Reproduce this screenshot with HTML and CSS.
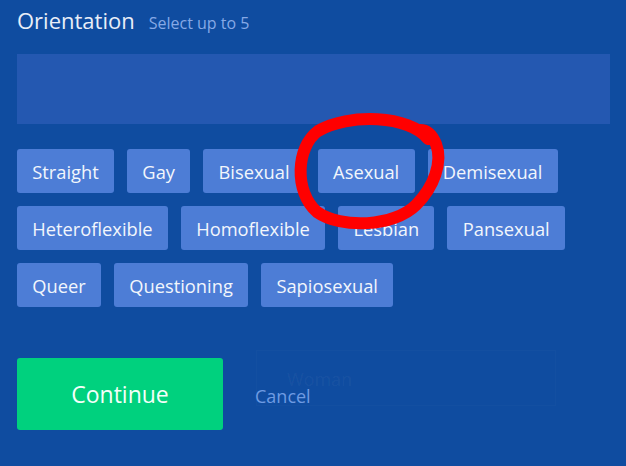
FILE: index.html
```html
<!DOCTYPE html>
<html>
<head>
<meta charset="utf-8">
<link rel="stylesheet" href="styles.css">
</head>
<body>
<div class="ghost" aria-hidden="true">
  <div class="ghost-tagline">the best dating site on Earth</div>
  <div class="ghost-field">Woman</div>
</div>
<main class="panel">
  <header class="head">
    <h1 class="title">Orientation</h1>
    <span class="hint">Select up to 5</span>
  </header>
  <div class="field"></div>
  <div class="chips">
    <button class="chip">Straight</button>
    <button class="chip">Gay</button>
    <button class="chip">Bisexual</button>
    <button class="chip">Asexual</button>
    <button class="chip">Demisexual</button>
    <button class="chip">Heteroflexible</button>
    <button class="chip">Homoflexible</button>
    <button class="chip">Lesbian</button>
    <button class="chip">Pansexual</button>
    <button class="chip">Queer</button>
    <button class="chip">Questioning</button>
    <button class="chip">Sapiosexual</button>
  </div>
  <div class="actions">
    <button class="continue">Continue</button>
    <a class="cancel" href="#">Cancel</a>
  </div>
</main>
<svg class="scribble" width="626" height="466" viewBox="0 0 626 466" aria-hidden="true">
  <path d="M428 139 C410 115 348 113 318 131 C296 147 294 192 317 212 C341 229 394 227 416 205 C434 187 443 162 436 144 C432 134 426 130 420 130" fill="none" stroke="#ff0000" stroke-width="12" stroke-linecap="round" stroke-linejoin="round"/>
</svg>
</body>
</html>
```
FILE: styles.css
```css
html, body {
  margin: 0;
  padding: 0;
}
body {
  width: 626px;
  height: 466px;
  overflow: hidden;
  background: #0f4ca0;
  font-family: "Open Sans", "Noto Sans", sans-serif;
  position: relative;
}
.ghost {
  position: absolute;
  inset: 0;
  pointer-events: none;
  overflow: hidden;
}
.ghost-tagline {
  position: absolute;
  left: 136px;
  top: 244px;
  font-size: 42px;
  white-space: nowrap;
  color: rgba(255, 255, 255, 0.025);
}
.ghost-field {
  position: absolute;
  left: 256px;
  top: 350px;
  width: 300px;
  height: 56px;
  padding-left: 30px;
  box-sizing: border-box;
  line-height: 56px;
  font-size: 18px;
  color: rgba(255, 255, 255, 0.05);
  border: 1px solid rgba(255, 255, 255, 0.02);
}
.panel {
  position: relative;
  padding: 5px 16px 0 17px;
}
.head {
  display: flex;
  align-items: baseline;
  gap: 14px;
}
.title {
  margin: 0;
  font-size: 22px;
  font-weight: 400;
  color: #e9eef8;
  line-height: 30px;
}
.hint {
  font-size: 16px;
  color: #86a9e6;
}
.field {
  margin-top: 19px;
  height: 70px;
  background: #2458b1;
}
.chips {
  margin-top: 25px;
  display: flex;
  flex-wrap: wrap;
  column-gap: 13px;
  row-gap: 13px;
  width: 593px;
}
.chip {
  height: 44px;
  padding: 0 15.3px;
  border: none;
  border-radius: 3px;
  background: #4d7dd6;
  color: #f2f6fc;
  font-family: "Open Sans", "Noto Sans", sans-serif;
  font-size: 18.3px;
  cursor: pointer;
}
.actions {
  margin-top: 51px;
  display: flex;
  align-items: center;
  gap: 32px;
}
.continue {
  width: 206px;
  height: 72px;
  border: none;
  border-radius: 3px;
  background: #00d17e;
  color: #f4fff9;
  font-family: "Open Sans", "Noto Sans", sans-serif;
  font-size: 23px;
}
.cancel {
  margin-top: 4px;
  font-size: 18px;
  color: #6e9be2;
  text-decoration: none;
}
.scribble {
  position: absolute;
  left: 0;
  top: 0;
  pointer-events: none;
}
```
